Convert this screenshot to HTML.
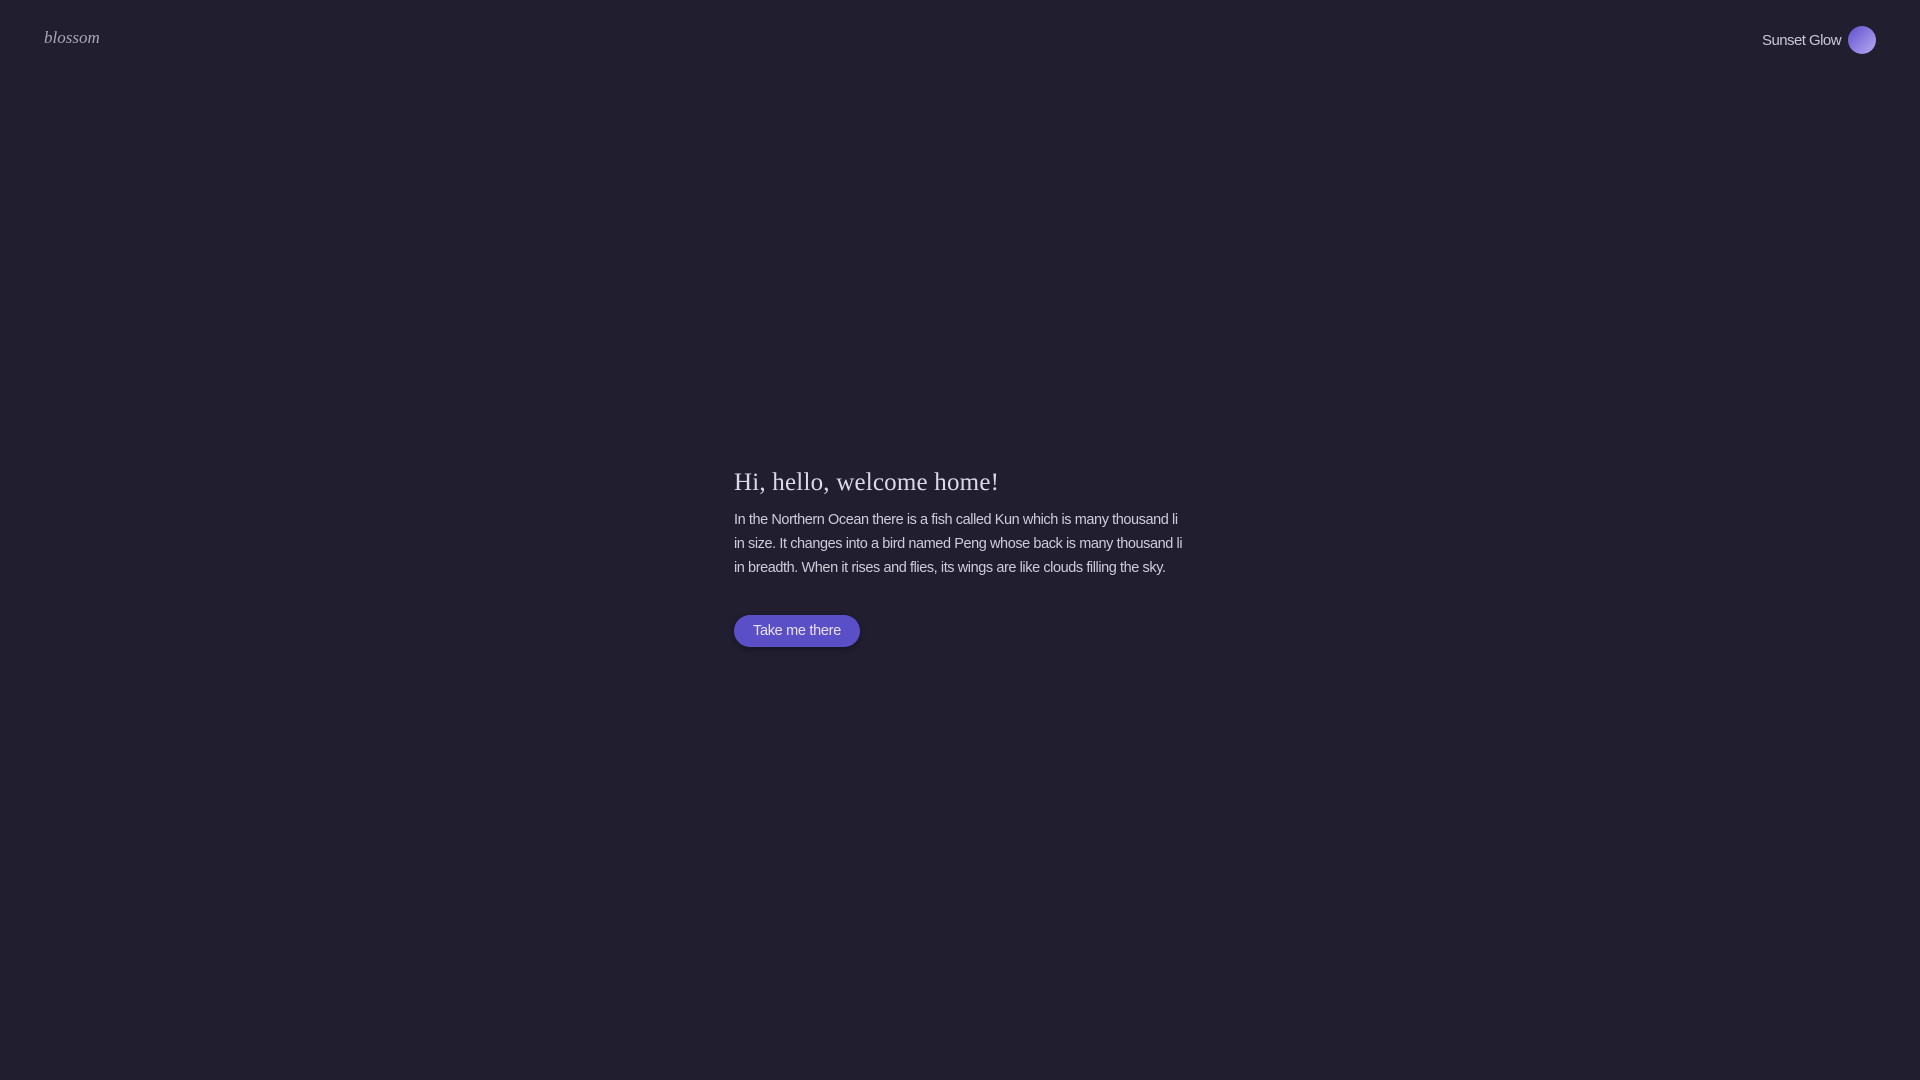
<!DOCTYPE html>
<html><head><style>
html,body{margin:0;width:1920px;height:1080px;background:#201e2f;overflow:hidden;font-family:"Liberation Sans",sans-serif;}
.logo{position:absolute;left:44px;top:28px;font-family:"Liberation Serif",serif;font-style:italic;font-size:17px;color:#a9a6b6;}
.theme{position:absolute;left:1762px;top:32px;font-size:15px;color:#c9c6d6;letter-spacing:-0.55px;}
.dot{position:absolute;left:1848px;top:26px;width:28px;height:28px;border-radius:50%;background:linear-gradient(135deg,#5e50cc,#b9aaf2);}
h1{position:absolute;left:734px;top:469px;margin:0;font-family:"Liberation Serif",serif;font-weight:normal;font-size:25px;color:#dcd8e8;letter-spacing:0.2px;}
.p{position:absolute;left:734px;top:508px;font-size:14.5px;line-height:24px;color:#cfcbdb;letter-spacing:-0.42px;white-space:nowrap;}
.btn{position:absolute;left:734px;top:615px;width:126px;height:32px;border-radius:16px;background:#5b4fc7;color:#e6e2f6;font-size:14.5px;letter-spacing:-0.3px;text-align:center;line-height:33px;box-shadow:0 2px 6px rgba(0,0,0,0.3);}
</style></head><body>
<div class="logo">blossom</div>
<div class="theme">Sunset Glow</div>
<div class="dot"></div>
<h1>Hi, hello, welcome home!</h1>
<div class="p">In the Northern Ocean there is a fish called Kun which is many thousand li<br>in size. It changes into a bird named Peng whose back is many thousand li<br>in breadth. When it rises and flies, its wings are like clouds filling the sky.</div>
<div class="btn">Take me there</div>
</body></html>
